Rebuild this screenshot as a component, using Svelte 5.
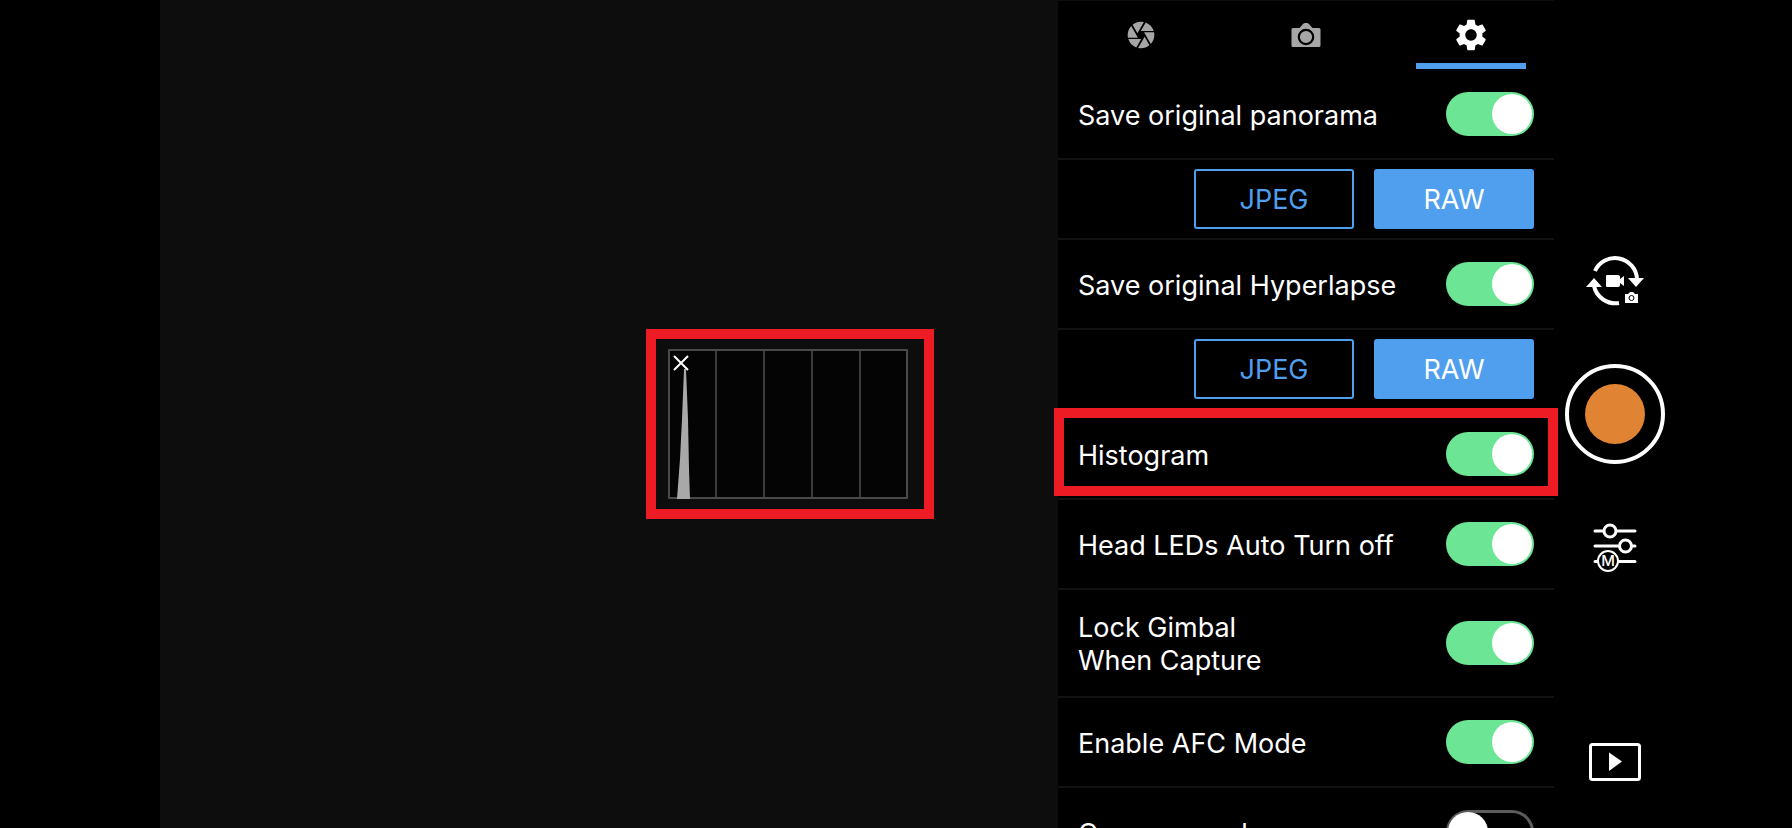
<script lang="ts">
    let activeTab: string = 'settings';

    let savePanorama: boolean = true;
    let panoramaFormat: string = 'RAW';
    let saveHyperlapse: boolean = true;
    let hyperlapseFormat: string = 'RAW';
    let histogram: boolean = true;
    let headLeds: boolean = true;
    let lockGimbal: boolean = true;
    let afcMode: boolean = true;
    let overexposed: boolean = false;

    const formats: string[] = ['JPEG', 'RAW'];
</script>

<main>
    <section class="view" aria-label="Camera view">
        {#if histogram}
            <div class="histogram">
                <svg width="240" height="150" viewBox="0 0 240 150">
                    <rect x="1" y="1" width="238" height="148" fill="#040404" stroke="#4a4a4a" stroke-width="2" />
                    <path d="M48 2v146M96 2v146M144 2v146M192 2v146" stroke="#3c3c3c" stroke-width="2" />
                    <path d="M9 150L12 110L14 70L16 20H18L20 70L21 120L22 150Z" fill="#a8a8a8" />
                </svg>
                <button class="close" aria-label="Close histogram" on:click={() => histogram = false}>
                    <svg width="16" height="16" viewBox="0 0 16 16">
                        <path d="M1 1l14 14M15 1L1 15" stroke="#fff" stroke-width="2" />
                    </svg>
                </button>
            </div>
        {/if}
    </section>

    <section class="panel">
        <nav class="tabs">
            <button class:active={activeTab === 'exposure'} aria-label="Exposure" on:click={() => activeTab = 'exposure'}>
                <svg width="32" height="32" viewBox="0 0 24 24" fill="currentColor">
                    <path d="M9.4 10.5l4.77-8.26C13.47 2.09 12.75 2 12 2c-2.4 0-4.6.85-6.32 2.25l3.66 6.35.06-.1zM21.54 9c-.92-2.92-3.15-5.26-6-6.34L11.88 9h9.66zm.26 1h-7.49l.29.5 4.76 8.25C21 16.97 22 14.61 22 12c0-.69-.07-1.35-.2-2zM8.54 12l-3.9-6.75C3.01 7.03 2 9.39 2 12c0 .69.07 1.35.2 2h7.49l-1.15-2zm-6.08 3c.92 2.92 3.15 5.26 6 6.34L12.12 15H2.46zm11.27 0l-3.9 6.76c.7.15 1.42.24 2.17.24 2.4 0 4.6-.85 6.32-2.25l-3.66-6.35-.93 1.6z" />
                </svg>
            </button>
            <button class:active={activeTab === 'camera'} aria-label="Camera" on:click={() => activeTab = 'camera'}>
                <svg width="30" height="24" viewBox="0 0 30 24" fill="currentColor">
                    <path d="M2 5H8.500L12 1Q13 0 14 0H16Q17 0 18 1L21.500 5H28Q29.500 5 29.500 6.500V22.500Q29.500 24 28 24H2Q0.500 24 0.500 22.500V6.500Q0.500 5 2 5Z" />
                    <circle cx="15" cy="14" r="7.200" stroke="#000" stroke-width="2.200" />
                </svg>
            </button>
            <button class:active={activeTab === 'settings'} aria-label="Settings" on:click={() => activeTab = 'settings'}>
                <svg width="38" height="38" viewBox="0 0 24 24" fill="currentColor">
                    <path d="M19.14 12.94c.04-.3.06-.61.06-.94 0-.32-.02-.64-.07-.94l2.030-1.580c.18-.14.23-.41.12-.61l-1.920-3.320c-.12-.22-.37-.29-.59-.22l-2.390.96c-.5-.38-1.030-.7-1.620-.94l-.36-2.540c-.04-.24-.24-.41-.48-.41h-3.840c-.24 0-.43.17-.47.41l-.36 2.540c-.59.24-1.130.57-1.620.94l-2.390-.96c-.22-.08-.47 0-.59.22L2.740 8.870c-.12.21-.08.47.12.61l2.030 1.580c-.05.3-.09.63-.09.94s.02.64.07.94l-2.030 1.580c-.18.14-.23.41-.12.61l1.920 3.320c.12.22.37.29.59.22l2.390-.96c.5.38 1.030.7 1.620.94l.36 2.540c.05.24.24.41.48.41h3.840c.24 0 .44-.17.47-.41l.36-2.540c.59-.24 1.130-.56 1.620-.94l2.390.96c.22.08.47 0 .59-.22l1.920-3.320c.12-.22.07-.47-.12-.61l-2.010-1.580zM12 15.600c-1.980 0-3.600-1.620-3.600-3.600s1.620-3.600 3.600-3.600 3.600 1.620 3.600 3.600-1.620 3.600-3.600 3.600z" />
                </svg>
            </button>
        </nav>

        <label class="row">
            <span>Save original panorama</span>
            <input type="checkbox" bind:checked={savePanorama}>
        </label>
        <div class="row formats">
            {#each formats as format}
                <button class:selected={panoramaFormat === format} on:click={() => panoramaFormat = format}>{format}</button>
            {/each}
        </div>
        <label class="row">
            <span>Save original Hyperlapse</span>
            <input type="checkbox" bind:checked={saveHyperlapse}>
        </label>
        <div class="row formats">
            {#each formats as format}
                <button class:selected={hyperlapseFormat === format} on:click={() => hyperlapseFormat = format}>{format}</button>
            {/each}
        </div>
        <label class="row marked">
            <span>Histogram</span>
            <input type="checkbox" bind:checked={histogram}>
        </label>
        <label class="row">
            <span>Head LEDs Auto Turn off</span>
            <input type="checkbox" bind:checked={headLeds}>
        </label>
        <label class="row">
            <span>Lock Gimbal<br>When Capture</span>
            <input type="checkbox" bind:checked={lockGimbal}>
        </label>
        <label class="row">
            <span>Enable AFC Mode</span>
            <input type="checkbox" bind:checked={afcMode}>
        </label>
        <label class="row">
            <span>Overexposed</span>
            <input type="checkbox" bind:checked={overexposed}>
        </label>
    </section>

    <aside class="toolbar">
        <button class="switch-mode" aria-label="Switch between photo and video">
            <svg width="60" height="50" viewBox="0 0 60 50">
                <path d="M10 15A22 22 0 0 1 52 23M9 30A22 22 0 0 0 34 47" fill="none" stroke="#fff" stroke-width="4" />
                <path d="M43 22H59L51 31ZM1 31H17L9 22Z" fill="#fff" />
                <path d="M22 19H33Q35 19 35 21V23L39 20V30L35 27V29Q35 31 33 31H22Q21 31 21 30V20Q21 19 22 19Z" fill="#fff" />
                <path d="M40 38H43L45 36H48L50 38H53V47H40Z" fill="#fff" />
                <circle cx="46.500" cy="42" r="2.500" fill="#fff" stroke="#000" stroke-width="1" />
            </svg>
        </button>
        <button class="record" aria-label="Record"></button>
        <button class="manual" aria-label="Manual camera settings">
            <svg width="44" height="50" viewBox="0 0 44 50">
                <path d="M2 9H10M24 9H42M2 24H25M39 24H42M2 39.500H5M26 39.500H42" stroke="#fff" stroke-width="3" stroke-linecap="round" />
                <circle cx="17" cy="9" r="6" fill="none" stroke="#fff" stroke-width="3" />
                <circle cx="32.500" cy="24" r="6" fill="none" stroke="#fff" stroke-width="3" />
                <circle cx="15" cy="39" r="10" fill="#000" stroke="#fff" stroke-width="2" />
                <text x="15" y="44" text-anchor="middle">M</text>
            </svg>
        </button>
        <button class="playback" aria-label="Playback">
            <svg width="52" height="38" viewBox="0 0 52 38">
                <rect x="1.500" y="1.500" width="49" height="35" rx="2" fill="none" stroke="#fff" stroke-width="3" />
                <path d="M20 9.500V28L33 18.500Z" fill="#fff" />
            </svg>
        </button>
    </aside>
</main>

<style>
    :global(body) {
        margin: 0;
        background: #000;
    }
    main {
        display: flex;
        height: 100vh;
        padding: 0 116px 0 160px;
        box-sizing: border-box;
        overflow: hidden;
        color: #fff;
        font-family: Inter, sans-serif;
        font-size: 27px;
        line-height: 33px;
        font-feature-settings: 'calt' 0, 'liga' 0;
    }
    button {
        padding: 0;
        border: none;
        background: none;
        color: inherit;
        font: inherit;
        cursor: pointer;
    }
    svg {
        display: block;
    }

    .view {
        position: relative;
        flex: 1;
        background: #0d0d0d;
    }
    .histogram {
        position: absolute;
        top: 329px;
        right: 124px;
        padding: 10px 16px 10px 12px;
        border: 10px solid #ed1c24;
    }
    .close {
        position: absolute;
        top: 16px;
        left: 17px;
    }

    .panel {
        width: 496px;
    }
    .tabs {
        display: grid;
        grid-template-columns: repeat(3, 1fr);
        height: 70px;
        box-sizing: border-box;
        border-top: 1px solid #0d0d0d;
    }
    .tabs button {
        position: relative;
        display: flex;
        align-items: center;
        justify-content: center;
        padding-bottom: 2px;
        color: #a6a6a6;
    }
    .tabs button.active {
        color: #fff;
    }
    .tabs button.active::after {
        content: '';
        position: absolute;
        bottom: 1px;
        width: 110px;
        height: 6px;
        background: #4f9fee;
    }

    .row {
        position: relative;
        display: flex;
        align-items: center;
        justify-content: space-between;
        min-height: 50px;
        padding: 19px 20px;
        border-bottom: 2px solid #111;
    }
    .row span {
        padding-top: 2px;
    }
    .row.formats {
        justify-content: flex-end;
        gap: 20px;
        min-height: 60px;
        padding: 9px 20px;
    }
    .formats button {
        width: 160px;
        height: 60px;
        border: 2px solid #4f9fee;
        border-radius: 3px;
        color: #4f9fee;
    }
    .formats button.selected {
        background: #4f9fee;
        color: #fff;
    }
    .row.marked::after {
        content: '';
        position: absolute;
        inset: -2px -4px 2px;
        border: 10px solid #ed1c24;
        pointer-events: none;
    }

    input {
        appearance: none;
        flex: none;
        width: 88px;
        height: 44px;
        margin: 0;
        padding: 2px;
        box-sizing: border-box;
        border-radius: 22px;
        box-shadow: inset 0 0 0 3px #5c5c5c;
        cursor: pointer;
    }
    input::before {
        content: '';
        display: block;
        width: 40px;
        height: 40px;
        border-radius: 50%;
        background: #fff;
    }
    input:checked {
        background: #6ce594;
        box-shadow: none;
    }
    input:checked::before {
        margin-left: auto;
    }

    .toolbar {
        display: grid;
        grid-template-rows: 1fr repeat(3, 133px) 1fr;
        place-items: center;
        width: 122px;
    }
    .switch-mode {
        grid-row: 2;
    }
    .record {
        grid-row: 3;
        width: 100px;
        height: 100px;
        border: 4px solid #fff;
        border-radius: 50%;
        padding: 16px;
        background: #e08433 content-box;
    }
    .manual {
        grid-row: 4;
    }
    .playback {
        grid-row: 5;
        align-self: end;
        margin-bottom: 47px;
    }
    .toolbar text {
        fill: #fff;
        font-size: 15px;
        font-weight: 500;
    }
</style>
